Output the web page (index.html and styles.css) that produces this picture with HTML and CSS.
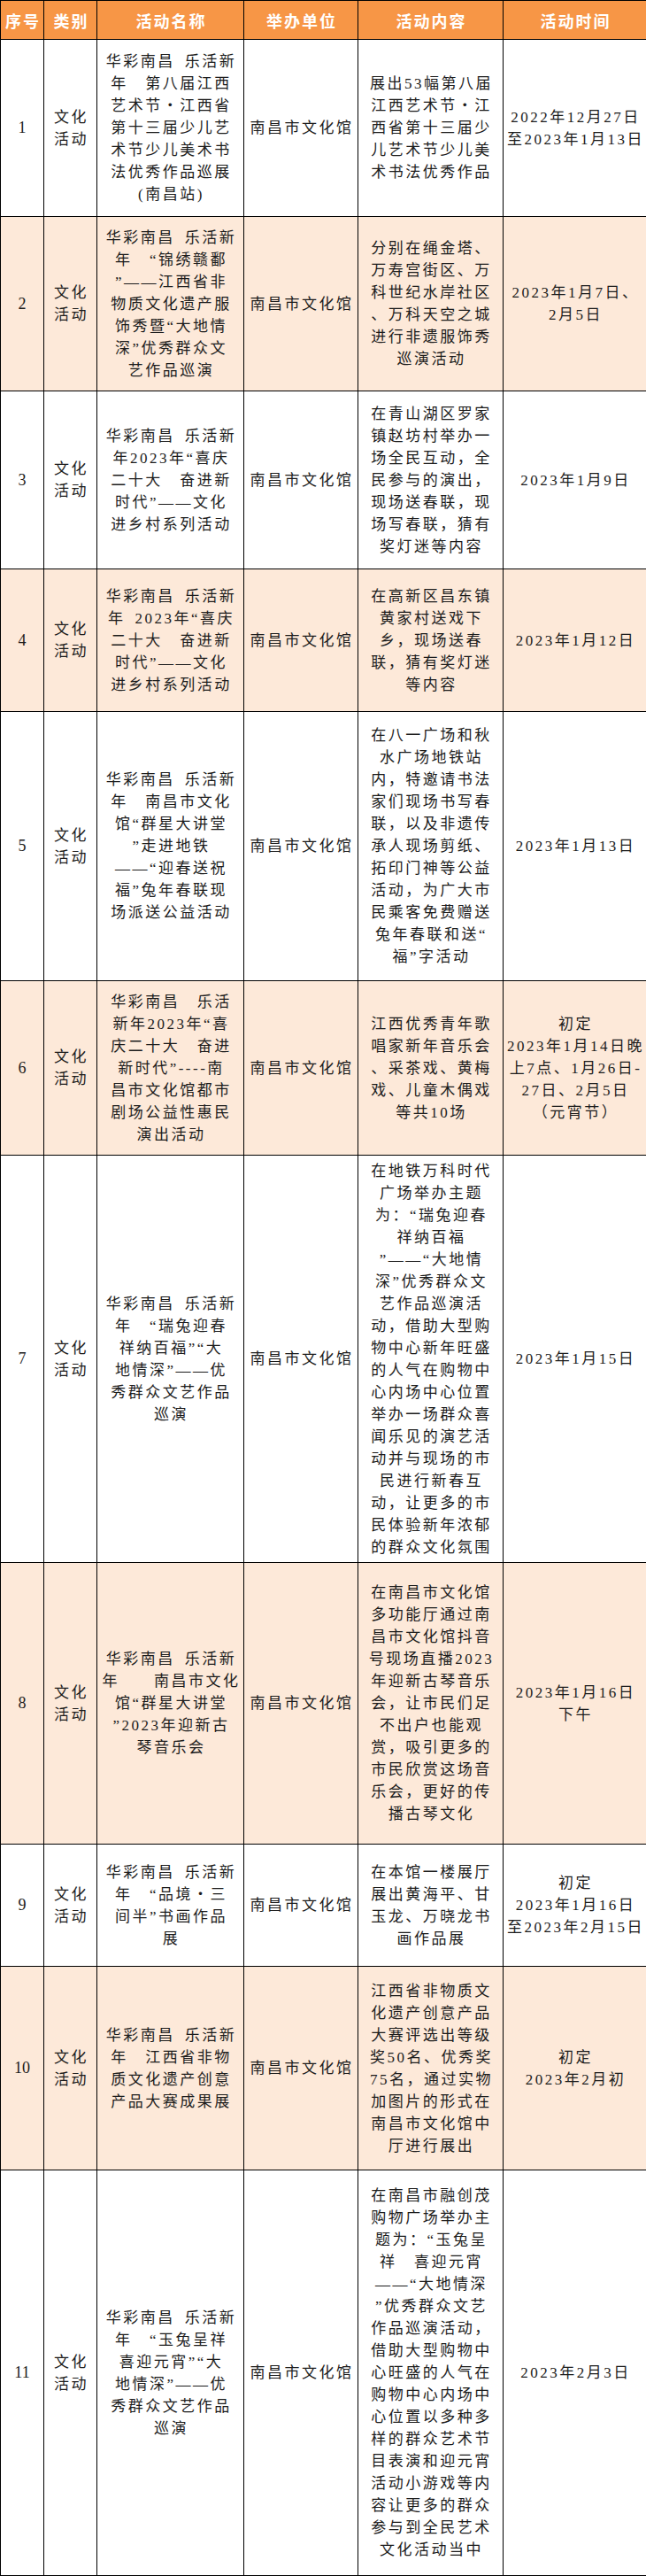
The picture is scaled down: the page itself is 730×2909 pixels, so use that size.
FILE: index.html
```html
<!DOCTYPE html>
<html lang="zh-CN">
<head>
<meta charset="utf-8">
<title>活动表</title>
<link rel="stylesheet" href="styles.css">
</head>
<body>
<table class="sheet">
  <colgroup>
    <col class="c-no">
    <col class="c-type">
    <col class="c-name">
    <col class="c-org">
    <col class="c-desc">
    <col class="c-time">
  </colgroup>
  <thead>
    <tr class="head">
      <th>序号</th><th>类别</th><th>活动名称</th><th>举办单位</th><th>活动内容</th><th>活动时间</th>
    </tr>
  </thead>
  <tbody>
    <tr class="r1">
      <td class="no">1</td>
      <td>文化<br>活动</td>
      <td>华彩南昌&ensp;乐活新<br>年　第八届江西<br>艺术节・江西省<br>第十三届少儿艺<br>术节少儿美术书<br>法优秀作品巡展<br>(南昌站)</td>
      <td>南昌市文化馆</td>
      <td>展出53幅第八届<br>江西艺术节・江<br>西省第十三届少<br>儿艺术节少儿美<br>术书法优秀作品</td>
      <td>2022年12月27日<br>至2023年1月13日</td>
    </tr>
    <tr class="r2 alt">
      <td class="no">2</td>
      <td>文化<br>活动</td>
      <td>华彩南昌&ensp;乐活新<br>年　“锦绣赣鄱<br>”——江西省非<br>物质文化遗产服<br>饰秀暨“大地情<br>深”优秀群众文<br>艺作品巡演</td>
      <td>南昌市文化馆</td>
      <td>分别在绳金塔、<br>万寿宫街区、万<br>科世纪水岸社区<br>、万科天空之城<br>进行非遗服饰秀<br>巡演活动</td>
      <td>2023年1月7日、<br>2月5日</td>
    </tr>
    <tr class="r3">
      <td class="no">3</td>
      <td>文化<br>活动</td>
      <td>华彩南昌&ensp;乐活新<br>年2023年“喜庆<br>二十大　奋进新<br>时代”——文化<br>进乡村系列活动</td>
      <td>南昌市文化馆</td>
      <td>在青山湖区罗家<br>镇赵坊村举办一<br>场全民互动，全<br>民参与的演出，<br>现场送春联，现<br>场写春联，猜有<br>奖灯迷等内容</td>
      <td>2023年1月9日</td>
    </tr>
    <tr class="r4 alt">
      <td class="no">4</td>
      <td>文化<br>活动</td>
      <td>华彩南昌&ensp;乐活新<br>年&ensp;2023年“喜庆<br>二十大　奋进新<br>时代”——文化<br>进乡村系列活动</td>
      <td>南昌市文化馆</td>
      <td>在高新区昌东镇<br>黄家村送戏下<br>乡，现场送春<br>联，猜有奖灯迷<br>等内容</td>
      <td>2023年1月12日</td>
    </tr>
    <tr class="r5">
      <td class="no">5</td>
      <td>文化<br>活动</td>
      <td>华彩南昌&ensp;乐活新<br>年　南昌市文化<br>馆“群星大讲堂<br>”走进地铁<br>——“迎春送祝<br>福”兔年春联现<br>场派送公益活动</td>
      <td>南昌市文化馆</td>
      <td>在八一广场和秋<br>水广场地铁站<br>内，特邀请书法<br>家们现场书写春<br>联，以及非遗传<br>承人现场剪纸、<br>拓印门神等公益<br>活动，为广大市<br>民乘客免费赠送<br>兔年春联和送“<br>福”字活动</td>
      <td>2023年1月13日</td>
    </tr>
    <tr class="r6 alt">
      <td class="no">6</td>
      <td>文化<br>活动</td>
      <td>华彩南昌　乐活<br>新年2023年“喜<br>庆二十大　奋进<br>新时代”----南<br>昌市文化馆都市<br>剧场公益性惠民<br>演出活动</td>
      <td>南昌市文化馆</td>
      <td>江西优秀青年歌<br>唱家新年音乐会<br>、采茶戏、黄梅<br>戏、儿童木偶戏<br>等共10场</td>
      <td>初定<br>2023年1月14日晚<br>上7点、1月26日-<br>27日、2月5日<br>（元宵节）</td>
    </tr>
    <tr class="r7">
      <td class="no">7</td>
      <td>文化<br>活动</td>
      <td>华彩南昌&ensp;乐活新<br>年　“瑞兔迎春<br>祥纳百福”“大<br>地情深”——优<br>秀群众文艺作品<br>巡演</td>
      <td>南昌市文化馆</td>
      <td>在地铁万科时代<br>广场举办主题<br>为：“瑞兔迎春<br>祥纳百福<br>”——“大地情<br>深”优秀群众文<br>艺作品巡演活<br>动，借助大型购<br>物中心新年旺盛<br>的人气在购物中<br>心内场中心位置<br>举办一场群众喜<br>闻乐见的演艺活<br>动并与现场的市<br>民进行新春互<br>动，让更多的市<br>民体验新年浓郁<br>的群众文化氛围</td>
      <td>2023年1月15日</td>
    </tr>
    <tr class="r8 alt">
      <td class="no">8</td>
      <td>文化<br>活动</td>
      <td>华彩南昌&ensp;乐活新<br>年　　南昌市文化<br>馆“群星大讲堂<br>”2023年迎新古<br>琴音乐会</td>
      <td>南昌市文化馆</td>
      <td>在南昌市文化馆<br>多功能厅通过南<br>昌市文化馆抖音<br>号现场直播2023<br>年迎新古琴音乐<br>会，让市民们足<br>不出户也能观<br>赏，吸引更多的<br>市民欣赏这场音<br>乐会，更好的传<br>播古琴文化</td>
      <td>2023年1月16日<br>下午</td>
    </tr>
    <tr class="r9">
      <td class="no">9</td>
      <td>文化<br>活动</td>
      <td>华彩南昌&ensp;乐活新<br>年　“品境・三<br>间半”书画作品<br>展</td>
      <td>南昌市文化馆</td>
      <td>在本馆一楼展厅<br>展出黄海平、甘<br>玉龙、万晓龙书<br>画作品展</td>
      <td>初定<br>2023年1月16日<br>至2023年2月15日</td>
    </tr>
    <tr class="r10 alt">
      <td class="no">10</td>
      <td>文化<br>活动</td>
      <td>华彩南昌&ensp;乐活新<br>年　江西省非物<br>质文化遗产创意<br>产品大赛成果展</td>
      <td>南昌市文化馆</td>
      <td>江西省非物质文<br>化遗产创意产品<br>大赛评选出等级<br>奖50名、优秀奖<br>75名，通过实物<br>加图片的形式在<br>南昌市文化馆中<br>厅进行展出</td>
      <td>初定<br>2023年2月初</td>
    </tr>
    <tr class="r11">
      <td class="no">11</td>
      <td>文化<br>活动</td>
      <td>华彩南昌&ensp;乐活新<br>年　“玉兔呈祥<br>喜迎元宵”“大<br>地情深”——优<br>秀群众文艺作品<br>巡演</td>
      <td>南昌市文化馆</td>
      <td>在南昌市融创茂<br>购物广场举办主<br>题为：“玉兔呈<br>祥　喜迎元宵<br>——“大地情深<br>”优秀群众文艺<br>作品巡演活动，<br>借助大型购物中<br>心旺盛的人气在<br>购物中心内场中<br>心位置以多种多<br>样的群众艺术节<br>目表演和迎元宵<br>活动小游戏等内<br>容让更多的群众<br>参与到全民艺术<br>文化活动当中</td>
      <td>2023年2月3日</td>
    </tr>
  </tbody>
</table>
</body>
</html>
```

FILE: styles.css
```css
html, body {
  margin: 0;
  padding: 0;
  background: #ffffff;
}

.sheet {
  width: 730px;
  table-layout: fixed;
  border-collapse: collapse;
  font-family: "Liberation Serif", "Noto Sans CJK SC", serif;
  color: #1c1c1c;
}

.c-no { width: 49px; }
.c-type { width: 60px; }
.c-name { width: 166px; }
.c-org { width: 129px; }
.c-desc { width: 164px; }
.c-time { width: 162px; }

.sheet th,
.sheet td {
  border: 1px solid #000;
  text-align: center;
  vertical-align: middle;
  padding: 0 0 0 2px;
  overflow: hidden;
  white-space: nowrap;
}

.sheet td {
  font-size: 17px;
  line-height: 25px;
  letter-spacing: 2.5px;
}

.sheet td.no {
  font-size: 18px;
  letter-spacing: 0;
  padding: 0;
}

.head {
  height: 44px;
  background: #f79646;
}

.head th {
  color: #ffffff;
  font-family: "Noto Sans CJK SC", sans-serif;
  font-weight: 700;
  font-size: 18px;
  letter-spacing: 2px;
  line-height: 24px;
  padding: 0 0 0 2px;
}

.alt { background: #fde9d9; }

.r1 { height: 200px; }
.r2 { height: 197px; }
.r3 { height: 201px; }
.r4 { height: 161px; }
.r5 { height: 304px; }
.r6 { height: 197px; }
.r7 { height: 460px; }
.r8 { height: 318px; }
.r9 { height: 138px; }
.r10 { height: 230px; }
.r11 { height: 458px; }
```
